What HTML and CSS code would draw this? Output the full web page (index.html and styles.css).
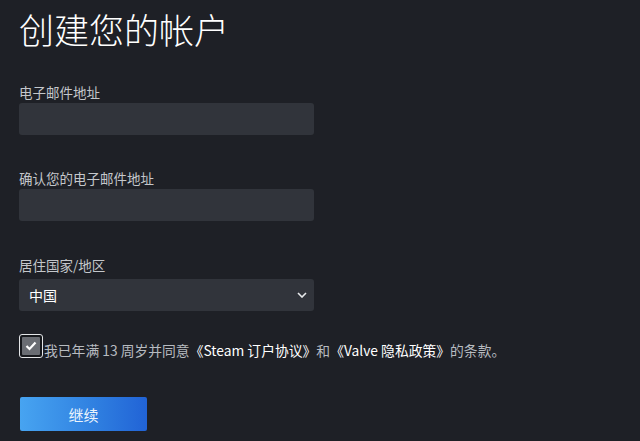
FILE: index.html
```html
<!DOCTYPE html>
<html lang="zh-CN">
<head>
    <meta charset="UTF-8">
    <meta name="viewport" content="width=device-width, initial-scale=1.0">
    <title>创建您的帐户</title>
    <link rel="stylesheet" href="styles.css">
</head>
<body>
    <div class="join-form">
        <h1 class="join-title">创建您的帐户</h1>

        <div class="field">
            <label for="email">电子邮件地址</label>
            <input type="email" id="email">
        </div>

        <div class="field">
            <label for="reenter-email">确认您的电子邮件地址</label>
            <input type="email" id="reenter-email">
        </div>

        <div class="field">
            <label for="country">居住国家/地区</label>
            <div class="select-wrap">
                <select id="country">
                    <option>中国</option>
                </select>
                <svg class="select-arrow" width="10" height="6" viewBox="0 0 10 6">
                    <path d="M1 1 L5 5 L9 1" fill="none" stroke="#e8eaec" stroke-width="1.6"/>
                </svg>
            </div>
        </div>

        <!-- Соглашение -->
        <label class="agree">
            <span class="checkbox">
                <span class="checkbox-inner">
                    <svg width="12" height="10" viewBox="0 0 12 10">
                        <path d="M1.5 5 L4.5 8 L10.5 1.5" fill="none" stroke="#fff" stroke-width="2.2"/>
                    </svg>
                </span>
            </span>
            <span class="agree-text">我已年满 13 周岁并同意<a href="#">《Steam 订户协议》</a>和<a href="#">《Valve 隐私政策》</a>的条款。</span>
        </label>

        <button class="continue-btn" type="button">继续</button>
    </div>
</body>
</html>
```

FILE: styles.css
```css
:root {
    --bg-color: #1e2026;
    --field-color: #31343b;
    --label-color: #c4c7cb;
    --text-color: #b7bbc0;
}

* {
    box-sizing: border-box;
    margin: 0;
    padding: 0;
    font-family: 'Noto Sans CJK SC', 'Noto Sans', sans-serif;
}

body {
    background-color: var(--bg-color);
    min-height: 100vh;
    padding: 9px 19px 0;
}

.join-form {
    display: flex;
    flex-direction: column;
    align-items: flex-start;
}

.join-title {
    font-size: 35px;
    line-height: 40px;
    font-weight: 300;
    color: #fff;
}

.field {
    margin-top: 34px;
    display: flex;
    flex-direction: column;
}

.field + .field {
    margin-top: 34px;
}

.field:nth-of-type(3) {
    margin-top: 35px;
}

.field label {
    font-size: 13.5px;
    line-height: 18px;
    color: var(--label-color);
    margin-bottom: 2px;
}

.field:nth-of-type(3) label {
    margin-bottom: 5px;
}

.field input,
.field select {
    width: 295px;
    height: 32px;
    background: var(--field-color);
    border: none;
    border-radius: 3px;
    color: #fff;
    font-size: 14px;
    padding: 0 10px;
    outline: none;
}

.select-wrap {
    position: relative;
}

.field select {
    appearance: none;
    -webkit-appearance: none;
}

.select-arrow {
    position: absolute;
    right: 7px;
    top: 13px;
}

.agree {
    margin-top: 21px;
    display: flex;
    align-items: center;
    cursor: pointer;
}

.checkbox {
    width: 24px;
    height: 24px;
    border: 1.5px solid #e4e6e8;
    border-radius: 3px;
    padding: 2px;
    display: flex;
    background: #16181c;
}

.checkbox-inner {
    flex: 1;
    background: #6a6d73;
    border-radius: 1px;
    display: flex;
    align-items: center;
    justify-content: center;
}

.agree-text {
    margin-left: 1px;
    margin-top: 9px;
    font-size: 13.8px;
    line-height: 18px;
    color: var(--text-color);
}

.agree-text a {
    color: #fff;
    text-decoration: none;
}

.continue-btn {
    margin-top: 38px;
    margin-left: 1px;
    width: 127px;
    height: 34px;
    border: none;
    border-radius: 2px;
    background: linear-gradient(90deg, #47a4f1 0%, #2f7fe0 60%, #2163d6 100%);
    color: #eaf3fc;
    font-size: 15px;
    cursor: pointer;
}
```
